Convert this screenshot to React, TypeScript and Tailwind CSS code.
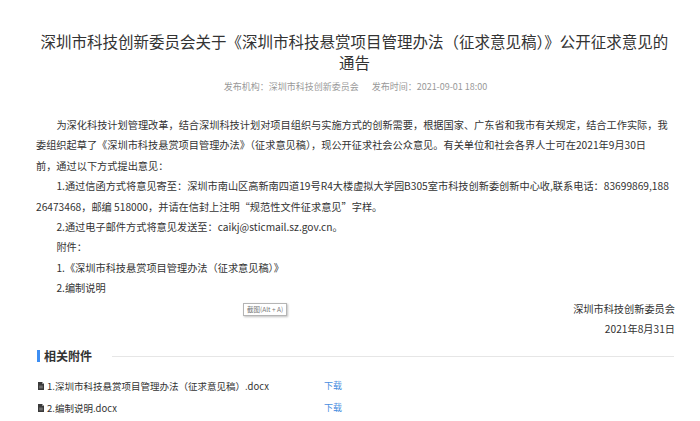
const cjk = { fontFamily: '"Noto Sans CJK SC", "Noto Sans", sans-serif' };

function DocIcon() {
  return (
    <svg width="6" height="8" viewBox="0 0 6 8" className="shrink-0">
      <path d="M0 0h4l2 2v6H0z" fill="#3a3a3a" />
      <path d="M4 0v2h2" fill="#9a9a9a" />
      <path d="M1.2 4.2h3.6M1.2 5.8h3.6" stroke="#bbb" strokeWidth="0.6" />
    </svg>
  );
}

const files = [
  "1.深圳市科技悬赏项目管理办法（征求意见稿）.docx",
  "2.编制说明.docx",
];

export default function App() {
  return (
    <div className="relative h-[421px] w-[700px] overflow-hidden bg-white text-[#333]" style={cjk}>
      <div className="pl-[36px] pr-[25px]">
        <h1 className="pt-[31px] pr-[2px] text-center text-[15.5px] leading-[21px] text-[#333]">
          深圳市科技创新委员会关于《深圳市科技悬赏项目管理办法（征求意见稿）》公开征求意见的通告
        </h1>
        <div className="mt-[8px] flex justify-center gap-[13px] text-[9px] leading-[12px] text-[#999]">
          <span>发布机构：深圳市科技创新委员会</span>
          <span>发布时间：2021-09-01 18:00</span>
        </div>

        <div className="mt-[22px] text-[10.2px] leading-[20.4px]">
          <p className="indent-[2em]">
            为深化科技计划管理改革，结合深圳科技计划对项目组织与实施方式的创新需要，根据国家、广东省和我市有关规定，结合工作实际，我委组织起草了《深圳市科技悬赏项目管理办法》（征求意见稿），现公开征求社会公众意见。有关单位和社会各界人士可在2021年9月30日
            <br />
            前，通过以下方式提出意见：
          </p>
          <p className="indent-[2em] break-all pr-[4px]">
            1.通过信函方式将意见寄至：深圳市南山区高新南四道19号R4大楼虚拟大学园B305室市科技创新委创新中心收,联系电话：83699869,18826473468，邮编 518000，并请在信封上注明“规范性文件征求意见”字样。
          </p>
          <p className="indent-[2em]">2.通过电子邮件方式将意见发送至：caikj@sticmail.sz.gov.cn。</p>
          <p className="indent-[2em]">附件：</p>
          <p className="indent-[2em]">1.《深圳市科技悬赏项目管理办法（征求意见稿）》</p>
          <p className="indent-[2em]">2.编制说明</p>
          <p className="text-right">深圳市科技创新委员会</p>
          <p className="text-right">2021年8月31日</p>
        </div>

        <div className="mt-[9px] flex items-center">
          <span className="ml-[1px] h-[12px] w-[3px] bg-[#3d8ef3]" />
          <span className="ml-[4px] text-[12px] font-bold leading-[16px] text-[#333]">相关附件</span>
          <span className="ml-[20px] mr-[1px] h-px flex-1 bg-[#e6e6e6]" />
        </div>

        <div className="mt-[14px] flex flex-col gap-[6px] text-[9.5px] leading-[16px]">
          {files.map((f) => (
            <div key={f} className="flex items-center">
              <span className="ml-[2px]">
                <DocIcon />
              </span>
              <span className="ml-[3px] w-[277px] text-[#333]">{f}</span>
              <a className="text-[9px] text-[#4a8ee0]">下载</a>
            </div>
          ))}
        </div>
      </div>

      <div className="absolute left-[243px] top-[303px] border border-[#b5b5b5] bg-white px-[3px] text-[6.5px] leading-[11px] text-[#777] shadow-[1px_1px_2px_rgba(0,0,0,0.25)]">
        截图(Alt + A)
      </div>
    </div>
  );
}
